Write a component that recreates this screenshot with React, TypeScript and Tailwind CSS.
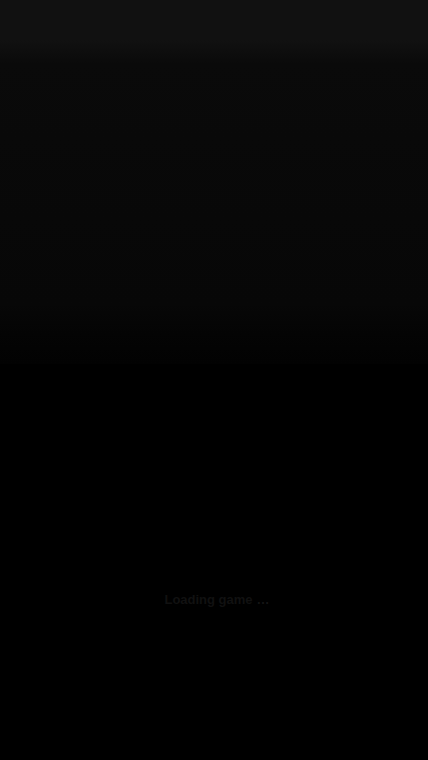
import React from 'react';

export default function App() {
  return (
    <div className="relative h-[760px] w-[428px] overflow-hidden bg-black font-['Liberation_Sans',sans-serif]">
      {/* dimmed backdrop */}
      <div className="flex h-full flex-col">
        <div className="h-[40px] bg-[#111111]" />
        <div className="h-[24px] bg-gradient-to-b from-[#111111] to-[#0a0a0a]" />
        <div className="h-[240px] bg-gradient-to-b from-[#0a0a0a] to-[#070707]" />
        <div className="h-[60px] bg-gradient-to-b from-[#070707] to-[#020202]" />
        <div className="flex-1 bg-black" />
      </div>

      {/* faint overlay content */}
      <div className="absolute inset-0 flex flex-col items-center">
        <div className="mt-[590px] ml-[6px] flex items-center gap-1 text-[13px] font-semibold text-[#111111]">
          <span>Loading game</span>
          <span className="text-[#151515]">…</span>
        </div>
      </div>
    </div>
  );
}
